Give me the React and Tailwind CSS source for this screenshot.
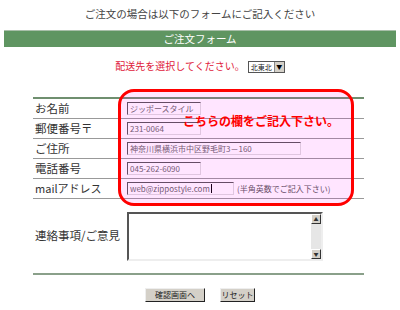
const ROWS = [
  { label: 'お名前', value: 'ジッポースタイル', w: 'w-[74px]' },
  { label: '郵便番号〒', value: '231-0064', w: 'w-[74px]' },
  { label: 'ご住所', value: '神奈川県横浜市中区野毛町3－160', w: 'w-[174px]' },
  { label: '電話番号', value: '045-262-6090', w: 'w-[74px]' },
]

function Field({ value, w, caret }) {
  return (
    <div
      className={`${w} h-[13px] border border-t-[#555] border-l-[#555] border-b-[#ddd] border-r-[#ddd] pl-[2px] text-[8px] leading-[11px] text-[#666] flex items-center whitespace-nowrap overflow-hidden`}
    >
      {value}
      {caret && <span className="ml-px w-px h-[9px] bg-black" />}
    </div>
  )
}

function Button({ w, children }) {
  return (
    <div
      className={`${w} h-[14px] bg-[#d4d0c8] border border-t-[#eee] border-l-[#eee] border-b-[#222] border-r-[#222] flex items-center justify-center text-[8px] leading-none text-[#222] whitespace-nowrap`}
    >
      {children}
    </div>
  )
}

export default function App() {
  return (
    <div className="w-[400px] h-[310px] bg-white relative overflow-hidden font-['Noto_Sans_CJK_JP',sans-serif] text-[#333]">
      {/* heading */}
      <div className="h-[30px] pt-[7px] text-center text-[10.5px] leading-[14px] text-[#444]">
        ご注文の場合は以下のフォームにご記入ください
      </div>
      <div className="mx-[4px] h-[17px] bg-[#5f9561] border-t border-[#a9bfa9] text-center text-white text-[10.5px] leading-[15px]">
        ご注文フォーム
      </div>

      {/* delivery area */}
      <div className="h-[50px] pt-[14px] flex justify-center items-start gap-[3px]">
        <span className="text-[10px] leading-[12px] text-[#e0203a] -mt-px">配送先を選択してください。</span>
        <div className="h-[12px] flex border border-[#555] bg-white">
          <span className="px-[2px] text-[7px] leading-[10px] text-[#222]">北東北</span>
          <span className="w-[10px] h-[10px] bg-[#d4d0c8] border-l border-[#888] flex items-center justify-center text-[6px] leading-none text-black">▼</span>
        </div>
      </div>

      {/* form table */}
      <div className="ml-[33px] w-[331px] border-t-2 border-[#6f8f6f]">
        {ROWS.map((r) => (
          <div key={r.label} className="h-[20px] flex items-center border-b border-[#999]">
            <span className="w-[94px] pl-[2px] text-[11.5px] leading-none text-[#333]">{r.label}</span>
            <Field value={r.value} w={r.w} />
          </div>
        ))}
        <div className="h-[20px] flex items-center border-b border-[#999]">
          <span className="w-[94px] pl-[2px] text-[11px] leading-none text-[#333]">mailアドレス</span>
          <Field value="web@zippostyle.com" w="w-[107px]" caret />
          <span className="ml-[3px] text-[8px] leading-none text-[#555]">(半角英数でご記入下さい)</span>
        </div>
        <div className="h-[74px] flex items-center">
          <span className="w-[94px] pl-[2px] text-[11.5px] leading-none text-[#333]">連絡事項/ご意見</span>
          <div className="w-[196px] h-[49px] flex border-2 border-t-[#555] border-l-[#555] border-b-[#eee] border-r-[#eee] bg-white">
            <div className="flex-1" />
            <div className="w-[10px] bg-[#e6e6e6] flex flex-col justify-between">
              <div className="h-[10px] bg-[#d4d0c8] border border-t-white border-l-white border-b-[#333] border-r-[#333] flex items-center justify-center text-[5px] leading-none">▲</div>
              <div className="h-[10px] bg-[#d4d0c8] border border-t-white border-l-white border-b-[#333] border-r-[#333] flex items-center justify-center text-[5px] leading-none">▼</div>
            </div>
          </div>
        </div>
        <div className="h-[2px] bg-[#8aa08a]" />
      </div>

      {/* buttons */}
      <div className="mt-[13px] flex justify-center gap-[15px]">
        <Button w="w-[60px]">確認画面へ</Button>
        <Button w="w-[35px]">リセット</Button>
      </div>

      {/* highlight overlay */}
      <div className="absolute left-[118px] top-[89px] w-[236px] h-[117px] rounded-[16px] border-[3px] border-[#f00] bg-[#ff00ff]/10 pointer-events-none">
        <div className="pl-[62px] pt-[22px] text-[12px] leading-[14px] font-bold text-[#f00] whitespace-nowrap">
          こちらの欄をご記入下さい。
        </div>
      </div>
    </div>
  )
}
